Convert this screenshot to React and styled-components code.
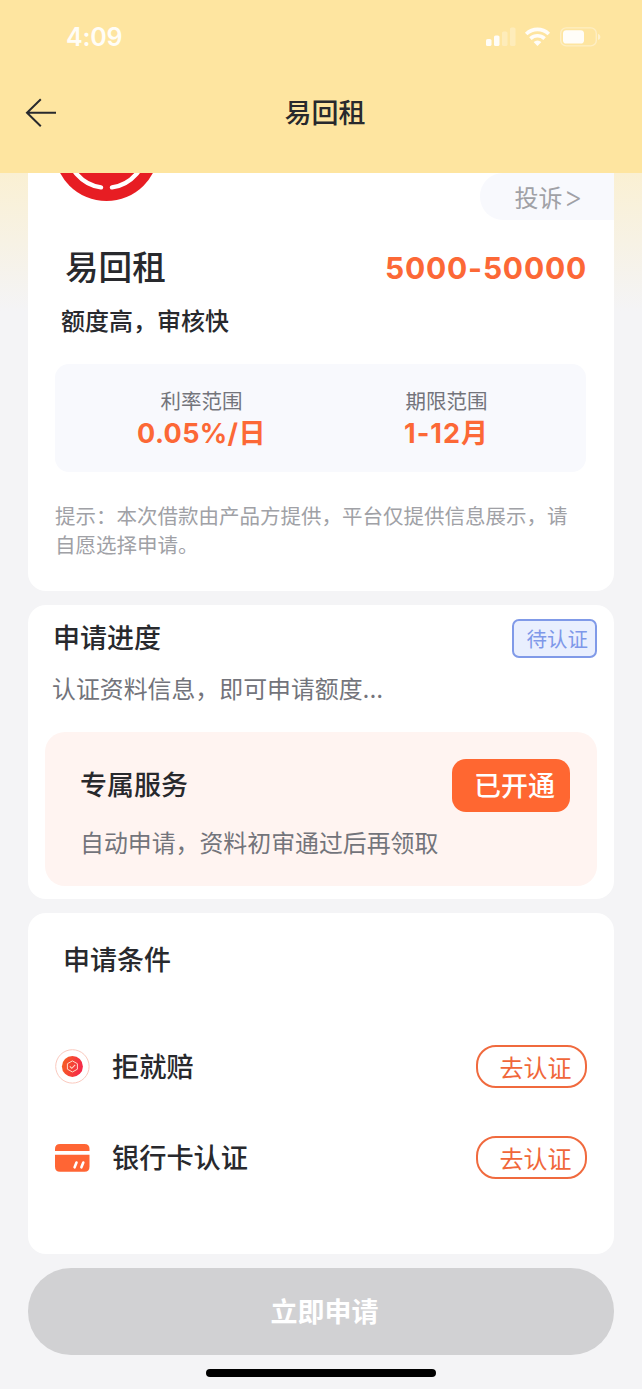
import React from 'react'
import styled, { createGlobalStyle } from 'styled-components'

const COLORS = {
  orange: '#fc6836',
  ink: '#28292d',
  gray: '#73747b',
  lightGray: '#a0a1a6',
  page: '#f4f4f6',
  panel: '#f8f9fd',
}

const GlobalStyle = createGlobalStyle`
  * {
    box-sizing: border-box;
  }

  body {
    margin: 0;
    background: ${COLORS.page};
    font-family: Inter, 'Noto Sans CJK SC', sans-serif;
    color: ${COLORS.ink};
  }

  h1, h2, h3, p {
    margin: 0;
    font-weight: 500;
  }

  button {
    font-family: inherit;
    margin: 0;
  }

  svg {
    display: block;
    flex: none;
  }
`

const Screen = styled.div`
  width: 642px;
  height: 1389px;
  display: flex;
  flex-direction: column;
  overflow: hidden;
`

const Header = styled.header`
  height: 173px;
  flex: none;
  background: #fee5a0;
`

const StatusBar = styled.div`
  height: 74px;
  padding: 0 41px 0 66px;
  display: flex;
  align-items: center;
  justify-content: space-between;
`

const Clock = styled.span`
  font-size: 25px;
  font-weight: 600;
  line-height: 30px;
  letter-spacing: -0.2px;
  color: #fffdf7;
`

const NavBar = styled.div`
  height: 78px;
  padding: 0 25px;
  display: grid;
  grid-template-columns: 100px 1fr 92px;
  align-items: center;
`

const NavTitle = styled.h1`
  padding-top: 2px;
  font-size: 27px;
  line-height: 36px;
  text-align: center;
`

const Main = styled.main`
  flex: 1;
  padding: 0 28px;
  display: flex;
  flex-direction: column;
  background: linear-gradient(#faf0d3, ${COLORS.page} 138px);
`

const Card = styled.section`
  height: ${(props) => props.$height}px;
  flex: none;
  margin-bottom: 14px;
  border-radius: ${(props) => (props.$flatTop ? '0 0 18px 18px' : '18px')};
  background: #fff;
`

const CardTop = styled.div`
  height: 71px;
  padding-left: 32px;
  display: flex;
  align-items: flex-start;
  justify-content: space-between;
`

const Complaint = styled.a`
  width: 134px;
  height: 47px;
  padding: 1px 0 0 34.5px;
  border-radius: 23px 0 0 23px;
  background: ${COLORS.panel};
  color: ${COLORS.lightGray};
  font-size: 24px;
  line-height: 49px;
  display: flex;
  gap: 1px;
`

const Chevron = styled.span`
  font-size: 29px;
  font-weight: 300;
  line-height: 45px;
`

const ProductRow = styled.div`
  height: 46px;
  padding: 0 27px 0 37px;
  display: flex;
  align-items: center;
  justify-content: space-between;
`

const ProductName = styled.h2`
  padding-top: 2px;
  font-size: 33.6px;
  line-height: 44px;
`

const Amount = styled.span`
  padding-top: 1px;
  font-size: 30px;
  font-weight: 700;
  line-height: 44px;
  letter-spacing: 0.8px;
  color: ${COLORS.orange};
`

const Slogan = styled.p`
  margin-top: 16px;
  padding-left: 33px;
  font-size: 24px;
  line-height: 32px;
`

const Stats = styled.div`
  height: 108px;
  margin: 26px 28px 0 27px;
  padding: 23px 0 0 24px;
  border-radius: 14px;
  background: ${COLORS.panel};
  display: grid;
  grid-template-columns: 245px 245px;
  text-align: center;
`

const StatLabel = styled.div`
  font-size: 20.5px;
  line-height: 30px;
  color: ${COLORS.gray};
`

const StatValue = styled.div`
  font-size: 27px;
  font-weight: 700;
  line-height: 34px;
  letter-spacing: ${(props) => props.$spacing || 0}px;
  color: ${COLORS.orange};
`

const Tips = styled.p`
  margin-top: 31px;
  padding: 0 40px 0 27px;
  font-size: 20.5px;
  font-weight: 400;
  line-height: 28.5px;
  color: ${COLORS.lightGray};
`

const ProgressHead = styled.div`
  padding: 14px 17px 0 25px;
  display: flex;
  align-items: center;
  justify-content: space-between;
`

const SectionTitle = styled.h3`
  font-size: 27px;
  line-height: 39px;
`

const Badge = styled.span`
  width: 85px;
  height: 39px;
  padding-left: 12.5px;
  border: 2px solid #809ae8;
  border-radius: 7px;
  background: #e9effe;
  color: #7e98e9;
  font-size: 20.5px;
  line-height: 37px;
`

const Description = styled.p`
  font-size: 23.9px;
  font-weight: 400;
  line-height: 34px;
  color: ${COLORS.gray};
`

const ProgressText = styled(Description)`
  margin-top: 15px;
  padding-left: 24px;
`

const Service = styled.div`
  height: 154px;
  margin: 25px 17px 0;
  padding: 27px 27px 0 35px;
  border-radius: 20px;
  background: #fff4f1;
`

const ServiceHead = styled.div`
  margin-bottom: 15px;
  display: flex;
  align-items: center;
  justify-content: space-between;
`

const OpenedButton = styled.button`
  width: 118px;
  height: 53px;
  padding: 0 0 2px 7px;
  border: 0;
  border-radius: 14px;
  background: #ff6731;
  color: #fff;
  font-size: 27px;
  font-weight: 500;
`

const ConditionTitle = styled(SectionTitle)`
  padding: 28px 0 0 35px;
  margin-bottom: 41px;
`

const Condition = styled.div`
  height: 91px;
  padding: 0 27px;
  display: flex;
  align-items: center;
`

const ConditionName = styled.span`
  flex: 1;
  margin-left: 22px;
  padding-top: 2px;
  font-size: 27.2px;
  font-weight: 500;
  line-height: 38px;
`

const VerifyButton = styled.button`
  width: 111px;
  height: 43px;
  padding: 0 0 1px 8px;
  border: 2px solid #f06a3e;
  border-radius: 20px;
  background: #fff;
  color: #f0673a;
  font-size: 24px;
`

const ApplyButton = styled.button`
  height: 87px;
  flex: none;
  padding: 0 0 3px 7px;
  border: 0;
  border-radius: 43px;
  background: #d1d1d3;
  color: #fff;
  font-size: 27px;
  font-weight: 700;
`

const HomeIndicator = styled.div`
  width: 230px;
  height: 8px;
  flex: none;
  margin: 14px auto 0;
  border-radius: 4px;
  background: #000;
`

const StatusIcons = () => (
  <svg width='116' height='24' viewBox='0 0 116 24' fill='#fffdf8'>
    <rect x='1' y='14' width='5.5' height='7' rx='1.6' />
    <rect x='9' y='10.5' width='5.5' height='10.5' rx='1.6' />
    <rect x='17' y='6.5' width='5.5' height='14.5' rx='1.6' opacity='.3' />
    <rect x='25' y='2.5' width='5.5' height='18.5' rx='1.6' opacity='.3' />
    <g fill='none' stroke='#fffdf8' strokeWidth='3.7'>
      <path d='M41.2 9C47.8 2.9 57.2 2.9 63.8 9' />
      <path d='M45.4 13.6C49.6 9.8 55.4 9.8 59.6 13.6' />
    </g>
    <path d='M48.6 17Q52.5 13.8 56.4 17L52.5 21Z' />
    <rect x='75.7' y='2.9' width='35.6' height='18' rx='5.5' fill='none' stroke='#fffdf8' strokeWidth='1.4' opacity='.4' />
    <rect x='78' y='5.2' width='21' height='13.4' rx='3.4' />
    <path d='M113 8.7v6.4q2.4-1 2.4-3.2T113 8.7z' opacity='.5' />
  </svg>
)

const BackArrow = () => (
  <svg width='32' height='30' viewBox='0 0 32 30' fill='none' stroke='#28292d' strokeWidth='2'>
    <path d='M15.8 1.2L2 14.7L15.8 28.2M2 14.7H31' />
  </svg>
)

const BrandLogo = () => (
  <svg width='94' height='29' viewBox='60 173 94 29'>
    <circle cx='106.5' cy='148.6' r='52.4' fill='#e71d23' />
    <g fill='none' stroke='#fff' strokeWidth='4.4' strokeLinecap='round'>
      <path d='M67.3 148.6A39.2 39.2 0 0 0 101 187.4' />
      <path d='M145.7 148.6A39.2 39.2 0 0 1 112 187.4' />
    </g>
  </svg>
)

const ShieldIcon = () => (
  <svg width='35' height='35' viewBox='0 0 35 35' fill='none'>
    <defs>
      <linearGradient id='shield' x1='0' y1='0' x2='1' y2='0.25'>
        <stop offset='0' stopColor='#f5641f' />
        <stop offset='1' stopColor='#f62a48' />
      </linearGradient>
    </defs>
    <circle cx='17.4' cy='17.4' r='16.7' stroke='#fac9be' />
    <circle cx='17.4' cy='17.4' r='10.5' fill='url(#shield)' />
    <path
      d='M17.4 11.9L22.4 14.7V20.2L17.4 23L12.4 20.2V14.7Z'
      stroke='#ffd9c8'
      strokeLinejoin='round'
    />
    <path d='M14.8 17.4L16.8 19.3L20.2 15.9' stroke='#ffd9c8' strokeWidth='1.1' />
  </svg>
)

const CardIcon = () => (
  <svg width='35' height='28' viewBox='0 0 35 28' fill='#ff6534'>
    <path d='M0 7V5Q0 0 5 0H29.5Q34.5 0 34.5 5V7Z' />
    <path d='M0 10.8H34.5V22.5Q34.5 27.8 29.5 27.8H5Q0 27.8 0 22.5Z' />
    <path
      d='M21.5 18.5L19.6 23.3M28.3 18.5L26.4 23.3'
      stroke='#fff'
      strokeWidth='2.6'
      strokeLinecap='round'
    />
  </svg>
)

const CONDITIONS = [
  { name: '拒就赔', Icon: ShieldIcon },
  { name: '银行卡认证', Icon: CardIcon },
]

const ProductCard = () => (
  <Card $height={418} $flatTop>
    <CardTop>
      <BrandLogo />
      <Complaint>
        <span>投诉</span>
        <Chevron>&gt;</Chevron>
      </Complaint>
    </CardTop>
    <ProductRow>
      <ProductName>易回租</ProductName>
      <Amount>5000-50000</Amount>
    </ProductRow>
    <Slogan>额度高，审核快</Slogan>
    <Stats>
      <div>
        <StatLabel>利率范围</StatLabel>
        <StatValue $spacing={0.4}>0.05%/日</StatValue>
      </div>
      <div>
        <StatLabel>期限范围</StatLabel>
        <StatValue $spacing={1}>1-12月</StatValue>
      </div>
    </Stats>
    <Tips>提示：本次借款由产品方提供，平台仅提供信息展示，请自愿选择申请。</Tips>
  </Card>
)

const ProgressCard = () => (
  <Card $height={294}>
    <ProgressHead>
      <SectionTitle>申请进度</SectionTitle>
      <Badge>待认证</Badge>
    </ProgressHead>
    <ProgressText>认证资料信息，即可申请额度...</ProgressText>
    <Service>
      <ServiceHead>
        <SectionTitle>专属服务</SectionTitle>
        <OpenedButton>已开通</OpenedButton>
      </ServiceHead>
      <Description>自动申请，资料初审通过后再领取</Description>
    </Service>
  </Card>
)

const ConditionCard = () => (
  <Card $height={341}>
    <ConditionTitle>申请条件</ConditionTitle>
    {CONDITIONS.map(({ name, Icon }) => (
      <Condition key={name}>
        <Icon />
        <ConditionName>{name}</ConditionName>
        <VerifyButton>去认证</VerifyButton>
      </Condition>
    ))}
  </Card>
)

const App = () => {
  return (
    <Screen lang='zh-CN'>
      <GlobalStyle />
      <Header>
        <StatusBar>
          <Clock>4:09</Clock>
          <StatusIcons />
        </StatusBar>
        <NavBar>
          <BackArrow />
          <NavTitle>易回租</NavTitle>
        </NavBar>
      </Header>
      <Main>
        <ProductCard />
        <ProgressCard />
        <ConditionCard />
        <ApplyButton>立即申请</ApplyButton>
        <HomeIndicator />
      </Main>
    </Screen>
  )
}

export default App
